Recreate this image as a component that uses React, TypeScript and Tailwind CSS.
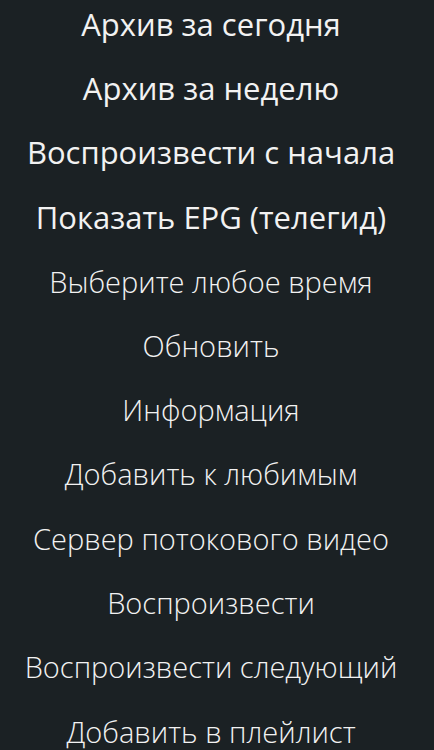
const ITEMS: { label: string; strong?: boolean }[] = [
  { label: "Архив за сегодня", strong: true },
  { label: "Архив за неделю", strong: true },
  { label: "Воспроизвести с начала", strong: true },
  { label: "Показать EPG (телегид)", strong: true },
  { label: "Выберите любое время" },
  { label: "Обновить" },
  { label: "Информация" },
  { label: "Добавить к любимым" },
  { label: "Сервер потокового видео" },
  { label: "Воспроизвести" },
  { label: "Воспроизвести следующий" },
  { label: "Добавить в плейлист" },
];

export default function App() {
  return (
    <div
      className="h-[750px] w-full overflow-hidden bg-[#1b2124] text-[#f2f2f2]"
      style={{ fontFamily: '"Open Sans", "Noto Sans", sans-serif' }}
    >
      <ul className="-mt-[8px] flex flex-col pr-[12px]">
        {ITEMS.map((item) => (
          <li
            key={item.label}
            className={`flex h-[64.3px] items-center justify-center whitespace-nowrap ${
              item.strong ? "text-[31px] font-medium" : "text-[29px] font-light"
            }`}
          >
            {item.label}
          </li>
        ))}
      </ul>
    </div>
  );
}
